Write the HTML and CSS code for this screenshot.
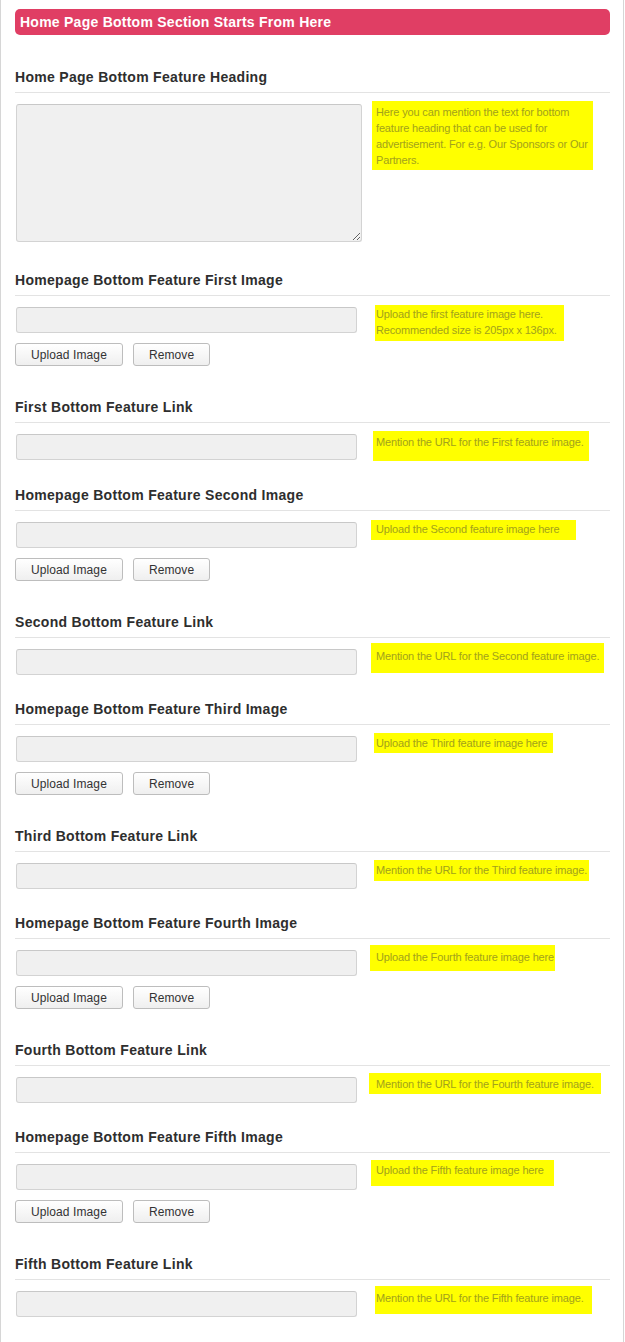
FILE: index.html
```html
<!DOCTYPE html>
<html lang="en">
<head>
<meta charset="utf-8">
<title>Home Page Bottom Section</title>
<link rel="stylesheet" href="styles.css">
</head>
<body>
<div class="panel">
  <div class="section-bar">Home Page Bottom Section Starts From Here</div>

  <section class="field field--text">
    <h3 class="field-title">Home Page Bottom Feature Heading</h3>
    <div class="field-row">
      <div class="field-main"><textarea class="text-area"></textarea></div>
      <div class="field-help"><span class="tip tip-1">Here you can mention the text for bottom<br>feature heading that can be used for<br>advertisement. For e.g. Our Sponsors or Our<br>Partners.</span></div>
    </div>
  </section>

  <section class="field">
    <h3 class="field-title">Homepage Bottom Feature First Image</h3>
    <div class="field-row">
      <div class="field-main">
        <input class="text-input" type="text">
        <div class="actions"><button class="btn" type="button">Upload Image</button><button class="btn" type="button">Remove</button></div>
      </div>
      <div class="field-help"><span class="tip tip-2">Upload the first feature image here.<br>Recommended size is 205px x 136px.</span></div>
    </div>
  </section>

  <section class="field">
    <h3 class="field-title">First Bottom Feature Link</h3>
    <div class="field-row">
      <div class="field-main"><input class="text-input" type="text"></div>
      <div class="field-help"><span class="tip tip-3">Mention the URL for the First feature image.</span></div>
    </div>
  </section>

  <section class="field">
    <h3 class="field-title">Homepage Bottom Feature Second Image</h3>
    <div class="field-row">
      <div class="field-main">
        <input class="text-input" type="text">
        <div class="actions"><button class="btn" type="button">Upload Image</button><button class="btn" type="button">Remove</button></div>
      </div>
      <div class="field-help"><span class="tip tip-4">Upload the Second feature image here</span></div>
    </div>
  </section>

  <section class="field">
    <h3 class="field-title">Second Bottom Feature Link</h3>
    <div class="field-row">
      <div class="field-main"><input class="text-input" type="text"></div>
      <div class="field-help"><span class="tip tip-5">Mention the URL for the Second feature image.</span></div>
    </div>
  </section>

  <section class="field">
    <h3 class="field-title">Homepage Bottom Feature Third Image</h3>
    <div class="field-row">
      <div class="field-main">
        <input class="text-input" type="text">
        <div class="actions"><button class="btn" type="button">Upload Image</button><button class="btn" type="button">Remove</button></div>
      </div>
      <div class="field-help"><span class="tip tip-6">Upload the Third feature image here</span></div>
    </div>
  </section>

  <section class="field">
    <h3 class="field-title">Third Bottom Feature Link</h3>
    <div class="field-row">
      <div class="field-main"><input class="text-input" type="text"></div>
      <div class="field-help"><span class="tip tip-7">Mention the URL for the Third feature image.</span></div>
    </div>
  </section>

  <section class="field">
    <h3 class="field-title">Homepage Bottom Feature Fourth Image</h3>
    <div class="field-row">
      <div class="field-main">
        <input class="text-input" type="text">
        <div class="actions"><button class="btn" type="button">Upload Image</button><button class="btn" type="button">Remove</button></div>
      </div>
      <div class="field-help"><span class="tip tip-8">Upload the Fourth feature image here</span></div>
    </div>
  </section>

  <section class="field">
    <h3 class="field-title">Fourth Bottom Feature Link</h3>
    <div class="field-row">
      <div class="field-main"><input class="text-input" type="text"></div>
      <div class="field-help"><span class="tip tip-9">Mention the URL for the Fourth feature image.</span></div>
    </div>
  </section>

  <section class="field">
    <h3 class="field-title">Homepage Bottom Feature Fifth Image</h3>
    <div class="field-row">
      <div class="field-main">
        <input class="text-input" type="text">
        <div class="actions"><button class="btn" type="button">Upload Image</button><button class="btn" type="button">Remove</button></div>
      </div>
      <div class="field-help"><span class="tip tip-10">Upload the Fifth feature image here</span></div>
    </div>
  </section>

  <section class="field">
    <h3 class="field-title">Fifth Bottom Feature Link</h3>
    <div class="field-row">
      <div class="field-main"><input class="text-input" type="text"></div>
      <div class="field-help"><span class="tip tip-11">Mention the URL for the Fifth feature image.</span></div>
    </div>
  </section>
</div>
</body>
</html>
```

FILE: styles.css
```css
* {
  box-sizing: border-box;
}

html, body {
  margin: 0;
  padding: 0;
  background: #ffffff;
}

body {
  font-family: "Liberation Sans", Arial, sans-serif;
  color: #333333;
}

.panel {
  width: 624px;
  min-height: 1342px;
  border-left: 1px solid #d6d6d6;
  border-right: 1px solid #d6d6d6;
  padding: 9px 13px 0 14px;
}

.section-bar {
  height: 26px;
  line-height: 26px;
  padding-left: 5px;
  background: #e03e64;
  color: #ffffff;
  font-size: 14px;
  font-weight: bold;
  letter-spacing: 0.25px;
  border-radius: 5px;
  margin-bottom: 32px;
}

.field {
  padding-bottom: 24px;
}

.field-title {
  margin: 0;
  font-size: 14px;
  font-weight: bold;
  line-height: 20px;
  letter-spacing: 0.3px;
  color: #2e2e2e;
  padding-bottom: 5px;
  border-bottom: 1px solid #e3e3e3;
}

.field-row {
  display: flex;
  align-items: flex-start;
}

.field-main {
  width: 353px;
  flex: none;
}

.field-help {
  flex: 1;
  min-width: 0;
}

.text-input {
  display: block;
  width: 341px;
  height: 26px;
  margin: 11px 0 0 1px;
  background: #f0f0f0;
  border: 1px solid #d3d3d3;
  border-top-color: #c8c8c8;
  border-radius: 3px;
  font: 12px "Liberation Sans", Arial, sans-serif;
}

.text-area {
  display: block;
  width: 346px;
  height: 138px;
  margin: 11px 0 4px 1px;
  background: #f0f0f0;
  border: 1px solid #d3d3d3;
  border-top-color: #c8c8c8;
  border-radius: 3px;
  font: 12px "Liberation Sans", Arial, sans-serif;
}

.actions {
  display: flex;
  gap: 10px;
  margin: 10px 0 7px;
}

.btn {
  height: 23px;
  padding: 0 15px;
  line-height: 21px;
  border: 1px solid #bdbdbd;
  border-radius: 3px;
  background: linear-gradient(#ffffff, #efefef);
  color: #333333;
  font: 12px "Liberation Sans", Arial, sans-serif;
  letter-spacing: 0.1px;
}

.tip {
  display: block;
  background: #ffff00;
  color: #a2a21c;
  font-size: 11px;
  line-height: 16px;
  letter-spacing: -0.15px;
  white-space: nowrap;
}

.tip-1 { margin: 8px 0 0 4px; width: 221px; padding: 3px 0 2px 4px; }
.tip-2 { margin: 9px 0 0 7px; width: 189px; padding: 1px 0 3px 1px; }
.tip-3 { margin: 8px 0 0 5px; width: 216px; padding: 3px 0 11px 3px; }
.tip-4 { margin: 9px 0 0 3px; width: 205px; padding: 1px 0 3px 5px; }
.tip-5 { margin: 5px 0 0 3px; width: 233px; padding: 5px 0 9px 5px; }
.tip-6 { margin: 8px 0 0 6px; width: 179px; padding: 2px 0 2px 2px; }
.tip-7 { margin: 8px 0 0 6px; width: 215px; padding: 2px 0 3px 2px; }
.tip-8 { margin: 6px 0 0 2px; width: 185px; padding: 4px 0 6px 6px; }
.tip-9 { margin: 7px 0 0 1px; width: 232px; padding: 3px 0 2px 7px; }
.tip-10 { margin: 7px 0 0 3px; width: 183px; padding: 2px 0 8px 5px; }
.tip-11 { margin: 6px 0 0 7px; width: 217px; padding: 4px 0 8px 1px; }
```
